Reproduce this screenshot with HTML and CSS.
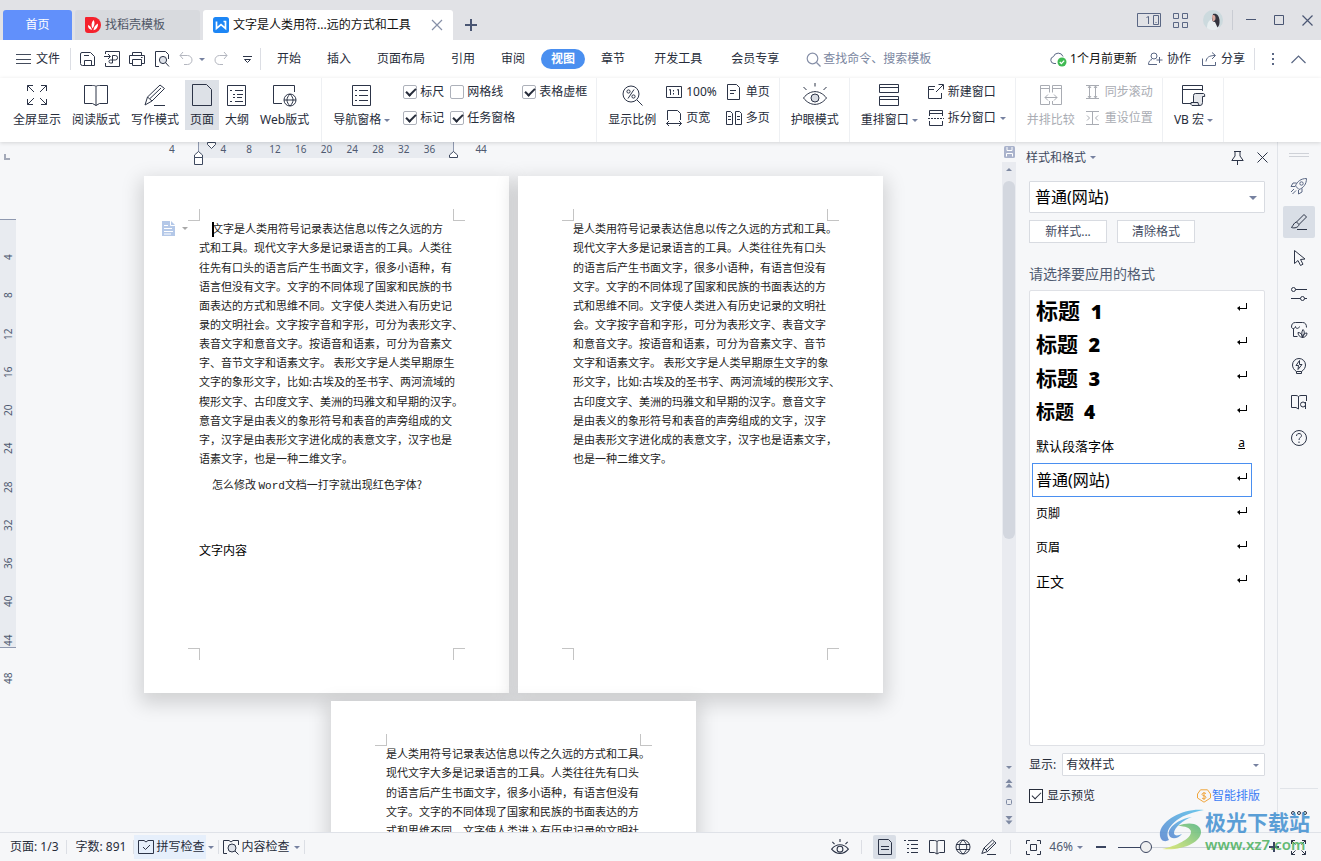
FILE: index.html
```html
<!DOCTYPE html>
<html lang="zh-CN">
<head>
<meta charset="utf-8">
<title>文字是人类用符...远的方式和工具</title>
<link rel="stylesheet" href="styles.css">
</head>
<body>
<div class="app">

<header class="titlebar">
  <nav class="doc-tabs">
    <button class="doc-tab home">首页</button>
    <button class="doc-tab template">
      <svg width="16" height="16" viewBox="0 0 16 16"><path d="M0 1Q0 0 1 0h7a8 8 0 0 1 0 16H3Q0 16 0 13z" fill="#f5222d"/><path d="M3 8c2 .5 3.500 2.500 4 5-3-.5-4.200-2.500-4-5zM8.500 3c1.800 2.500 1 6-1 8.500C6 9 6.200 5.500 8.500 3zM13 6.500c.2 3.500-1.500 6-4.500 6.800C8.800 10 10.200 7.800 13 6.500z" fill="#fff"/></svg>
      找稻壳模板</button>
    <div class="doc-tab current">
      <svg width="16" height="16" viewBox="0 0 16 16"><rect width="16" height="16" rx="2.500" fill="#1d86f5"/><path d="M3.500 4.500v6.800L8 7.500l4.500 3.800V4.500h-2" fill="none" stroke="#fff" stroke-width="1.700"/></svg>
      <span class="doc-name">文字是人类用符...远的方式和工具</span>
      <button class="plain" aria-label="关闭标签"><svg width="12" height="12" viewBox="0 0 12 12"><path d="M1 1l10 10M11 1L1 11" stroke="#8790a8" stroke-width="1.200"/></svg></button>
    </div>
    <button class="plain new-tab" aria-label="新建"><svg width="12" height="12" viewBox="0 0 12 12"><path d="M6 0v12M0 6h12" stroke="#4a5673" stroke-width="2"/></svg></button>
  </nav>
  <div class="win-tools">
    <button class="plain" aria-label="窗口布局"><svg width="24" height="14" viewBox="0 0 24 14" fill="none" stroke="#5a6784"><path d="M.5.5h23v13H.5zM16.500 2.500h5v9h-5zM9.500 4.500l2-1v7.500M18.500 9.500h1"/></svg></button>
    <button class="plain apps" aria-label="应用"><svg width="15" height="15" viewBox="0 0 15 15" fill="none" stroke="#5a6784"><path d="M.5.5h5v5h-5zM9.500.5h5v5h-5zM.5 9.500h5v5h-5zM9.500 9.500h5v5h-5z"/></svg></button>
    <button class="plain avatar" aria-label="用户"><svg width="20" height="20" viewBox="0 0 20 20"><circle cx="10" cy="10" r="10" fill="#ccdade"/><path d="M4 18c0-5 2-8 5-9l5 1 2 8a10 10 0 0 1-12 0z" fill="#e8eef0"/><path d="M10 4c4-1 6 2 6.500 6 .3 4-.5 6-2 7.500L12 12c-2 0-3-1-3-3z" fill="#33343e"/><path d="M9 5.500c2-1 3.500 0 3.500 2.500s-1.500 3.500-3 3z" fill="#d9aaa0"/></svg></button>
    <i class="vline"></i>
    <button class="plain" aria-label="最小化"><svg width="10" height="12" viewBox="0 0 10 12"><path d="M0 5.500h10" stroke="#4a5673"/></svg></button>
    <button class="plain max" aria-label="最大化"><svg width="10" height="10" viewBox="0 0 10 10"><path d="M.5.5h9v9h-9z" fill="none" stroke="#4a5673"/></svg></button>
    <button class="plain" aria-label="关闭"><svg width="11" height="11" viewBox="0 0 11 11"><path d="M.5.5l10 10M10.500.5l-10 10" stroke="#4a5673" stroke-width="1.200"/></svg></button>
  </div>
</header>

<div class="menubar">
  <button class="file-btn"><svg width="15" height="12" viewBox="0 0 15 12"><path d="M0 1.500h15M0 6.500h15M0 10.500h15" stroke="#444c5c"/></svg>文件</button>
  <i class="vline"></i>
  <div class="quick">
    <button class="plain" aria-label="保存"><svg class="ico" width="16" height="16" viewBox="0 0 16 16"><path d="M3 1.500h8.500l4 4v9H3.500q-2 0-2-2V3q0-1.500 1.500-1.500zM5.500 14.500v-5h7v5M5 4.500h5"/></svg></button>
    <button class="plain" aria-label="输出PDF"><svg class="ico" width="16" height="16" viewBox="0 0 16 16"><path d="M1.500 3V.500h14v15h-14V12M0 5.500h6M4 3l2.500 2.500L4 8M8.500 12V4.500h2.800a2.200 2.200 0 0 1 0 4.500H6.500a1.500 1.500 0 1 0 0 3h2"/></svg></button>
    <button class="plain" aria-label="打印"><svg class="ico" width="16" height="16" viewBox="0 0 16 16"><path d="M3.500 4.500v-3h9v3M3.500 12.500h-3v-8h15v8h-3M3.500 8.500h9v6h-9zM12 6.500h1.500"/></svg></button>
    <button class="plain" aria-label="打印预览"><svg class="ico" width="16" height="16" viewBox="0 0 16 16"><path d="M5 15.500H1.500V.500h10l3 3V8"/><circle cx="9" cy="9" r="3.600" fill="#dfe3ea"/><path d="M11.500 11.500l3.500 4"/></svg></button>
    <button class="plain pair" aria-label="撤销"><svg class="ico dim" width="14" height="16" viewBox="0 0 14 16"><path d="M4 1L1 4.500 4 8M1 4.500h7.500a4.500 4.500 0 0 1 0 9H5"/></svg><b class="caret"></b></button>
    <button class="plain" aria-label="恢复"><svg class="ico dim" width="14" height="16" viewBox="0 0 14 16"><path d="M10 1l3 3.500L10 8M13 4.500H5.500a4.500 4.500 0 0 0 0 9H9"/></svg></button>
    <button class="plain more" aria-label="自定义"><svg class="ico" width="9" height="9" viewBox="0 0 9 9"><path d="M0 1.500h9M1.500 4.500h6l-3 3z"/></svg></button>
  </div>
  <i class="vline"></i>
  <nav class="menu">
    <button>开始</button><button>插入</button><button>页面布局</button><button>引用</button><button>审阅</button><button class="active">视图</button><button>章节</button><button class="shift">开发工具</button><button class="shift">会员专享</button>
  </nav>
  <label class="search"><svg width="15" height="15" viewBox="0 0 15 15" fill="none" stroke="#8790a8" stroke-width="1.200"><circle cx="6.500" cy="6.500" r="5.300"/><path d="M10.500 10.500l4 4"/></svg><input type="text" placeholder="查找命令、搜索模板" aria-label="查找命令"></label>
  <div class="menu-right">
    <button class="strong"><svg width="17" height="16" viewBox="0 0 17 16"><path d="M6 12.500H4a3.500 3.500 0 0 1-.5-6.900A5 5 0 0 1 13 5.500" fill="none" stroke="#5a6784"/><circle cx="12" cy="11" r="4.500" fill="#3fba52"/><path d="M9.800 11l1.600 1.600 2.800-3" fill="none" stroke="#fff" stroke-width="1.300"/></svg>1个月前更新</button>
    <button class="collab"><svg class="ico soft" width="15" height="14" viewBox="0 0 15 14"><circle cx="6" cy="4" r="3"/><path d="M4 7.500C2 8 .500 9.500.500 12.500H9M11.500 5v6M8.500 8h6"/></svg>协作</button>
    <button class="share"><svg class="ico soft" width="15" height="14" viewBox="0 0 15 14"><path d="M.500 6.500v7h13V10M4 9.500c.5-4 3-6 9-6M10 .500l3.500 3L10 7"/></svg>分享</button>
    <i class="vline"></i>
    <button class="plain dots" aria-label="更多"><svg width="3" height="13" viewBox="0 0 3 13" fill="#5a6784"><path d="M0 0h2v2H0zM0 5h2v2H0zM0 10h2v2H0z"/></svg></button>
    <button class="plain" aria-label="折叠功能区"><svg width="15" height="9" viewBox="0 0 15 9"><path d="M.5 8l7-7 7 7" fill="none" stroke="#5a6784" stroke-width="1.200"/></svg></button>
  </div>
</div>

<div class="ribbon">
  <div class="group views-group">
    <button class="big"><svg class="ico" width="24" height="24" viewBox="0 0 24 24"><path d="M2.500 8V2.500H8M2.500 2.500L9 9M16 2.500h5.500V8M21.500 2.500L15 9M2.500 16v5.500H8M2.500 21.500L9 15M21.500 16v5.500H16M21.500 21.500L15 15"/></svg><span>全屏显示</span></button>
    <button class="big"><svg class="ico" width="24" height="24" viewBox="0 0 24 24"><path d="M12 3.500C11 2.500 10 2.500 8.500 2.500h-8v18h8l3.500 2 3.500-2h8v-18h-8c-1.500 0-2.500 0-3.500 1zM12 3.500v19"/></svg><span>阅读版式</span></button>
    <button class="big"><svg class="ico" width="24" height="24" viewBox="0 0 24 24"><path d="M2 22l2.500-8L17 2l4.500 3.500L9 18zM4.500 14L9 18M7 15.500L18 5M11 22.500h11"/></svg><span>写作模式</span></button>
    <button class="big on"><svg class="ico" width="24" height="24" viewBox="0 0 24 24"><path d="M2.500 1.500h14l5 5v16h-19z"/></svg><span>页面</span></button>
    <button class="big"><svg class="ico" width="24" height="24" viewBox="0 0 24 24"><path d="M2.500 2.500h18v20h-18zM5 7.500h2M10 7.500h8M8 11.500h2M12 11.500h6M8 14.500h2M12 14.500h5M5 18.500h2M10 18.500h8"/></svg><span>大纲</span></button>
    <button class="big"><svg class="ico" width="24" height="24" viewBox="0 0 24 24"><path d="M9 20.500H.5v-18h21V9"/><circle cx="17" cy="17" r="6"/><path d="M11 17h12M17 11c-4 4-4 8 0 12M17 11c4 4 4 8 0 12"/></svg><span>Web版式</span></button>
  </div>
  <div class="group">
    <button class="big"><svg class="ico" width="24" height="24" viewBox="0 0 24 24"><path d="M2.500 2.500h18v20h-18zM5 7.500h2M9 7.500h9M5 12.500h2M9 12.500h9M5 17.500h2M9 17.500h9"/></svg><span>导航窗格<b class="caret"></b></span></button>
    <div class="checks">
      <label><input type="checkbox" checked>标尺</label><label><input type="checkbox">网格线</label><label><input type="checkbox" checked>表格虚框</label>
      <label><input type="checkbox" checked>标记</label><label><input type="checkbox" checked>任务窗格</label>
    </div>
  </div>
  <div class="group">
    <button class="big"><svg class="ico" width="24" height="24" viewBox="0 0 24 24"><circle cx="11" cy="11" r="8"/><path d="M17 17l5.500 5.500M14 6.500l-6 9"/><circle cx="8.500" cy="8.500" r="1.600"/><circle cx="13.500" cy="13.500" r="1.600"/></svg><span>显示比例</span></button>
    <div class="stack">
      <button><svg class="ico" width="16" height="16" viewBox="0 0 16 16"><path d="M.5 2.500h15v11H.5zM3 6l1.500-.5v5.500M11 6l1.500-.5v5.500M7.500 6v1.500M7.500 9v1.500"/></svg>100%</button>
      <button><svg class="ico" width="16" height="16" viewBox="0 0 16 16"><path d="M1.500 10V.500h10l3 3V10M.5 13.500h15M3 11L.5 13.500 3 16M13 11l2.500 2.500L13 16"/></svg>页宽</button>
    </div>
    <div class="stack">
      <button><svg class="ico" width="16" height="16" viewBox="0 0 16 16"><path d="M1.500.5h9l3 3v12h-12zM4 6.500h6M4 9.500h4"/></svg>单页</button>
      <button><svg class="ico" width="16" height="16" viewBox="0 0 16 16"><path d="M.5 1.500h4l2 2v11h-6zM9.500 1.500h4l2 2v11h-6zM2 6.500h3M2 9.500h3M11 6.500h3M11 9.500h3"/></svg>多页</button>
    </div>
  </div>
  <div class="group">
    <button class="big"><svg class="ico" width="24" height="24" viewBox="0 0 24 24"><path d="M.5 15C7 6.500 17 6.500 23.500 15 17 23.500 7 23.500.5 15zM12 0v3.500M.5 4l3 3M23.500 4l-3 3"/><circle cx="12" cy="15" r="4" fill="#d9dce3"/></svg><span>护眼模式</span></button>
  </div>
  <div class="group">
    <button class="big"><svg class="ico" width="24" height="24" viewBox="0 0 24 24"><path d="M2.500 1.500h19v8h-19zM2.500 4.500h19M2.500 13.500h19v9h-19zM2.500 16.500h19"/></svg><span>重排窗口<b class="caret"></b></span></button>
    <div class="stack">
      <button><svg class="ico" width="16" height="16" viewBox="0 0 16 16"><path d="M7 2.500H.5v12h13V9M.5 5.500H6M8 8l7-7M10.500.5h5v5"/></svg>新建窗口</button>
      <button><svg class="ico" width="16" height="16" viewBox="0 0 16 16"><path d="M1.500 6V.5h13V6M1.500 3.500h13M1.500 11v4.500h13V11"/><path d="M0 8.500h16" stroke-dasharray="2 1"/></svg>拆分窗口<b class="caret"></b></button>
    </div>
  </div>
  <div class="group off">
    <button class="big" disabled><svg class="ico" width="24" height="24" viewBox="0 0 24 24"><path d="M10.500 9.500v-7h-9v19h9V18M1.500 5.500h9M13.500 9.500v-7h9v19h-9V18M13.500 5.500h9M6 14.500h12M9 11.500l-3 3 3 3M15 11.500l3 3-3 3"/></svg><span>并排比较</span></button>
    <div class="stack">
      <button disabled><svg class="ico" width="16" height="16" viewBox="0 0 16 16"><path d="M1 1.500h13M1 14.500h13M4.500 2v12M10.500 2v12M3 4l1.500-2L6 4M3 12l1.500 2L6 12M9 4l1.500-2L12 4M9 12l1.500 2 1.500-2"/></svg>同步滚动</button>
      <button disabled><svg class="ico" width="16" height="16" viewBox="0 0 16 16"><path d="M1 1.500h13M1 14.500h13M7.500 2v12M2 5.500L4.500 8 2 10.500M13 5.500L10.500 8l2.500 2.500"/></svg>重设位置</button>
    </div>
  </div>
  <div class="group">
    <button class="big"><svg class="ico" width="24" height="24" viewBox="0 0 24 24"><path d="M10 20.500H1.500v-18h20V8M1.500 6.500h20"/><path d="M12.500 19.500v-7q0-2 2-2h8q1.500 0 1.200 3h-2.200v6q0 3-2.500 3h-8q-1.500-.5-1-3h7q0 3 2 3" fill="#e6e8ec"/></svg><span>VB 宏<b class="caret"></b></span></button>
  </div>
</div>

<main class="workspace">
  <aside class="ruler-v">
    <div class="tab-stop"><svg width="6" height="6" viewBox="0 0 6 6"><path d="M1 0v5h5" fill="none" stroke="#a3a9b8" stroke-width="2"/></svg></div>
    <div class="band"><span>4</span><span>8</span><span>12</span><span>16</span><span>20</span><span>24</span><span>28</span><span>32</span><span>36</span><span>40</span><span>44</span><span>48</span></div>
  </aside>

  <section class="canvas">
    <div class="ruler-h">
      <div class="ticks"><span>4</span><span></span><span>4</span><span>8</span><span>12</span><span>16</span><span>20</span><span>24</span><span>28</span><span>32</span><span>36</span><span></span><span>44</span></div>
      <div class="range">
        <svg class="m-first" width="9" height="7" viewBox="0 0 9 7"><path d="M.5.500h8v2l-4 4-4-4z"/></svg>
        <svg class="m-left" width="9" height="14" viewBox="0 0 9 14"><path d="M.5 6.500v-2.500l4-3.500 4 3.500v2.500zM.5 6.500h8v7h-8z"/></svg>
        <svg class="m-right" width="9" height="7" viewBox="0 0 9 7"><path d="M.5 6.500v-2.500l4-3.500 4 3.500v2.500z"/></svg>
      </div>
    </div>
    <div class="pages">
      <article class="page">
        <i class="mark tl"></i><i class="mark tr"></i><i class="mark bl"></i><i class="mark br"></i>
        <div class="para-tool"><svg width="13" height="15" viewBox="0 0 13 15"><path d="M0 0h9l4 4v11H0z" fill="#b4c8e8"/><path d="M2 4.500h4M2 7.500h8M2 10.500h9M2 13h7M8.500 0v4.500H13" fill="none" stroke="#fff"/></svg><b class="caret"></b></div>
        <p class="first"><span class="indent cursor">文字是人类用符号记录表达信息以传之久远的方</span><span>式和工具。现代文字大多是记录语言的工具。人类往</span><span>往先有口头的语言后产生书面文字，很多小语种，有</span><span>语言但没有文字。文字的不同体现了国家和民族的书</span><span>面表达的方式和思维不同。文字使人类进入有历史记</span><span>录的文明社会。文字按字音和字形，可分为表形文字、</span><span>表音文字和意音文字。按语音和语素，可分为音素文</span><span>字、音节文字和语素文字。 表形文字是人类早期原生</span><span>文字的象形文字，比如:古埃及的圣书字、两河流域的</span><span>楔形文字、古印度文字、美洲的玛雅文和早期的汉字。</span><span>意音文字是由表义的象形符号和表音的声旁组成的文</span><span>字，汉字是由表形文字进化成的表意文字，汉字也是</span><span>语素文字，也是一种二维文字。</span></p>
        <p class="question"><span class="indent">怎么修改 <em>Word</em>文档一打字就出现红色字体?</span></p>
        <p class="body-text">文字内容</p>
      </article>
      <article class="page">
        <i class="mark tl"></i><i class="mark tr"></i><i class="mark bl"></i><i class="mark br"></i>
        <p><span>是人类用符号记录表达信息以传之久远的方式和工具。</span><span>现代文字大多是记录语言的工具。人类往往先有口头</span><span>的语言后产生书面文字，很多小语种，有语言但没有</span><span>文字。文字的不同体现了国家和民族的书面表达的方</span><span>式和思维不同。文字使人类进入有历史记录的文明社</span><span>会。文字按字音和字形，可分为表形文字、表音文字</span><span>和意音文字。按语音和语素，可分为音素文字、音节</span><span>文字和语素文字。 表形文字是人类早期原生文字的象</span><span>形文字，比如:古埃及的圣书字、两河流域的楔形文字、</span><span>古印度文字、美洲的玛雅文和早期的汉字。意音文字</span><span>是由表义的象形符号和表音的声旁组成的文字，汉字</span><span>是由表形文字进化成的表意文字，汉字也是语素文字，</span><span>也是一种二维文字。</span></p>
      </article>
      <article class="page">
        <i class="mark tl"></i><i class="mark tr"></i>
        <p><span>是人类用符号记录表达信息以传之久远的方式和工具。</span><span>现代文字大多是记录语言的工具。人类往往先有口头</span><span>的语言后产生书面文字，很多小语种，有语言但没有</span><span>文字。文字的不同体现了国家和民族的书面表达的方</span><span>式和思维不同。文字使人类进入有历史记录的文明社</span></p>
      </article>
    </div>
  </section>

  <div class="scrollbar">
    <svg class="sb-save" width="11" height="12" viewBox="0 0 11 12"><rect width="11" height="12" rx="1.500" fill="#aab3cc"/><path d="M3 1v3.500h5V1M2.500 10.500V7.500h6v3" fill="none" stroke="#fff"/></svg>
    <div class="sb-track">
      <b class="up"></b>
      <i class="thumb"></i>
      <span class="grow"></span>
      <b class="down"></b>
      <svg width="8" height="9" viewBox="0 0 8 9" fill="#7f8aa3"><path d="M4 0l3.500 4h-7zM4 4.500l3.500 4h-7z"/></svg>
      <svg width="8" height="8" viewBox="0 0 8 8"><rect x="1.500" y="1.500" width="5" height="5" rx="1" fill="none" stroke="#7f8aa3"/></svg>
      <svg width="8" height="9" viewBox="0 0 8 9" fill="#7f8aa3"><path d="M4 4L.5 0h7zM4 8.500L.5 4.500h7z"/></svg>
    </div>
  </div>

  <aside class="panel">
    <div class="panel-head">
      <button class="panel-title">样式和格式<b class="caret"></b></button>
      <button class="plain" aria-label="固定"><svg class="ico" width="13" height="14" viewBox="0 0 13 14"><path d="M3 .500h7M4 .500v4.500L.800 9.500h11.400L9 5V.500M6.500 9.500V14"/></svg></button>
      <button class="plain" aria-label="关闭窗格"><svg class="ico" width="11" height="11" viewBox="0 0 11 11"><path d="M.5.500l10 10M10.500.500l-10 10"/></svg></button>
    </div>
    <div class="picker large"><select aria-label="当前样式"><option>普通(网站)</option></select></div>
    <div class="panel-btns"><button>新样式...</button><button>清除格式</button></div>
    <h2 id="fmt">请选择要应用的格式</h2>
    <ul class="styles" aria-labelledby="fmt">
      <li class="h1"><span>标题 <b>1</b></span><i class="ret"></i></li>
      <li class="h2"><span>标题 <b>2</b></span><i class="ret"></i></li>
      <li class="h3"><span>标题 <b>3</b></span><i class="ret"></i></li>
      <li class="h4"><span>标题 <b>4</b></span><i class="ret"></i></li>
      <li class="s13"><span>默认段落字体</span><u>a</u></li>
      <li class="s16 sel"><span>普通(网站)</span><i class="ret"></i></li>
      <li class="s12"><span>页脚</span><i class="ret"></i></li>
      <li class="s12"><span>页眉</span><i class="ret"></i></li>
      <li class="s14"><span>正文</span><i class="ret"></i></li>
    </ul>
    <div class="show-row"><label for="show">显示:</label><div class="picker"><select id="show"><option>有效样式</option></select></div></div>
    <div class="preview-row"><label><input type="checkbox" checked>显示预览</label>
      <a href="#"><svg width="14" height="14" viewBox="0 0 14 14" fill="none" stroke="#f0a53c"><path d="M3.500.800h7L13.500 5v4L7 13.200.500 9V5z"/><path d="M9 4.500C7 3.500 5 4 5 5.500s4 1 4 2.700S6.500 10 5 9.200M7 3v8"/></svg>智能排版</a></div>
  </aside>

  <nav class="side">
    <i class="grip"></i>
    <button aria-label="推荐"><svg class="ico soft" width="18" height="18" viewBox="0 0 18 18"><path d="M5.500 9C7 4.500 11 1.500 16.500 1.500 16.500 7 13.500 11 9 12.500zM6.500 6H3L1 9.500h4M12 11.500V15l-3.500 2v-4M4 12l-3 3M6 13.500l-3.500 3.500"/><circle cx="11.500" cy="6.500" r="1.700"/></svg></button>
    <button class="on" aria-label="样式和格式"><svg class="ico" width="18" height="18" viewBox="0 0 18 18"><path d="M6.500 9L14 1.500l2.500 2.500L9 11.500zM6.500 9c-2.500.5-3 3-5 5.500 3 1 7 0 7.500-3M7 16.500h10"/></svg></button>
    <button aria-label="选择"><svg class="ico" width="18" height="18" viewBox="0 0 18 18"><path d="M4.500 1.500v13l3.500-3 2.500 5 2.500-1.300-2.500-4.700 4.500-.5z"/></svg></button>
    <button aria-label="设置"><svg class="ico" width="18" height="18" viewBox="0 0 18 18"><circle cx="3.500" cy="4.500" r="2"/><path d="M5.500 4.500H17M1 13.500h9.500M14.500 13.500H17"/><circle cx="12.500" cy="13.500" r="2"/></svg></button>
    <button aria-label="素材"><svg class="ico" width="18" height="18" viewBox="0 0 18 18"><path d="M3.500 7.500v8h4M1.500 6q0-4.500 4-4.500h7q4 0 4 5M1.500 6c.5 2.500 3.500 2 4-.5 0 2.500 3.500 2.500 4 0"/><path d="M12.500 16.500c-3-.5-4.500-2.500-4.500-5 2.500 0 4 1.500 4.500 5-1-3-1-6 .5-8 2 2 1.500 5-.5 8 .5-3 2-4.500 4.500-4.500 0 2.500-2 4.500-4.500 4.500z"/></svg></button>
    <button aria-label="创意"><svg class="ico" width="18" height="18" viewBox="0 0 18 18"><path d="M6.500 14.500C4 13 2.500 10.500 2.500 8a6.500 6.500 0 0 1 13 0c0 2.500-1.500 5-4 6.500zM6.500 14.500v2h5v-2M9.500 3.500L6 8.500h2.500L8 12.500l4-5H9.500z"/></svg></button>
    <button aria-label="阅读"><svg class="ico" width="18" height="18" viewBox="0 0 18 18"><path d="M8.500 3.500Q7.500 2.500 6 2.500H1.500v12H6l2.500 1.500M8.500 3.500Q9.500 2.500 11 2.500h5.500V8M8.500 3.500V16"/><circle cx="13" cy="11.500" r="2.500"/><path d="M15.500 9v7"/></svg></button>
    <button aria-label="帮助"><svg class="ico" width="18" height="18" viewBox="0 0 18 18"><circle cx="9" cy="9" r="7.500"/><path d="M6.500 7c0-3.500 5-3 5-.5 0 2-2.500 2-2.500 4.500M9 12.500V14"/></svg></button>
    <span class="side-end"></span>
    <button aria-label="更多"><svg class="ico" width="18" height="18" viewBox="0 0 18 18"><circle cx="3" cy="9" r="1.500"/><circle cx="9" cy="9" r="1.500"/><circle cx="15" cy="9" r="1.500"/></svg></button>
  </nav>
</main>

<footer class="status">
  <div class="st-left">
    <span class="cell">页面: 1/3</span><span class="cell">字数: 891</span>
    <span class="cell tight"><button class="lit"><svg class="ico" width="16" height="16" viewBox="0 0 16 16"><path d="M.500 1.500h5.500l2 1.500 2-1.500h5.500v13H.500zM5 8l2.500 2.500L12 6"/></svg>拼写检查</button><b class="caret"></b></span>
    <span class="cell tight"><button><svg class="ico" width="16" height="16" viewBox="0 0 16 16"><path d="M4 14.500H.500v-13H6l2 1.500 2-1.500h5.500V6"/><circle cx="9" cy="9" r="4" fill="#dfe3ea"/><path d="M12 12l3.500 3.500"/></svg>内容检查</button><b class="caret"></b></span>
  </div>
  <div class="st-right">
    <button class="plain view" aria-label="护眼"><svg class="ico" width="18" height="16" viewBox="0 0 24 22"><path d="M.500 14C7 6 17 6 23.500 14 17 22 7 22 .500 14zM12 0v4M1.500 4l3 3M22.500 4l-3 3" stroke-width="1.500"/><circle cx="12" cy="14" r="4" stroke-width="1.500"/></svg></button>
    <i class="vline"></i>
    <div class="views">
      <button class="plain view on" aria-label="页面视图"><svg class="ico" width="16" height="16" viewBox="0 0 16 16"><path d="M1.500.500h10l3 3v12h-13zM4 7.500h8M4 10.500h8"/></svg></button>
      <button class="plain view" aria-label="大纲视图"><svg class="ico" width="16" height="16" viewBox="0 0 16 16"><path d="M1 1.500h2M5 1.500h10M4 5.500h2M8 5.500h7M4 9.500h2M8 9.500h7M4 13.500h2M8 13.500h7"/></svg></button>
      <button class="plain view" aria-label="阅读视图"><svg class="ico" width="16" height="16" viewBox="0 0 16 16"><path d="M8 2.500Q7 1.500 5.500 1.500h-5v12h5L8 15l2.500-1.500h5v-12h-5Q9 1.500 8 2.500zV15"/></svg></button>
      <button class="plain view" aria-label="Web视图"><svg class="ico" width="16" height="16" viewBox="0 0 16 16"><circle cx="8" cy="8" r="7"/><path d="M1 5.500h14M1 10.500h14M8 1c-5 4-5 10 0 14M8 1c5 4 5 10 0 14"/></svg></button>
      <button class="plain view" aria-label="写作视图"><svg class="ico" width="16" height="16" viewBox="0 0 16 16"><path d="M.800 14.500L3 9l8.500-8 3.500 3-8.500 8.500zM3 9l3.500 3.500M5 11l8-7.500M6 15.500h9"/></svg></button>
    </div>
    <i class="vline"></i>
    <button class="plain fit" aria-label="适应窗口"><svg class="ico" width="15" height="15" viewBox="0 0 15 15"><path d="M.500 4V.500H4M11 .500h3.500V4M.500 11v3.500H4M14.500 11v3.500H11M4.500 4.500h6v6h-6z"/></svg></button>
    <button class="zoom">46%<b class="caret"></b></button>
    <button class="plain" aria-label="缩小"><svg width="10" height="10" viewBox="0 0 10 10"><path d="M0 5h10" stroke="#3a4560" stroke-width="2"/></svg></button>
    <input class="slider" type="range" min="0" max="100" value="17" aria-label="缩放">
    <button class="plain" aria-label="放大"><svg width="10" height="10" viewBox="0 0 10 10"><path d="M0 5h10M5 0v10" stroke="#3a4560" stroke-width="2"/></svg></button>
    <button class="plain full" aria-label="全屏"><svg class="ico" width="15" height="15" viewBox="0 0 15 15"><path d="M.500 4V.500H4M.500.500l4 4M11 .500h3.500V4M14.500.500l-4 4M.500 11v3.500H4M.500 14.500l4-4M14.500 11v3.500H11M14.500 14.500l-4-4"/></svg></button>
  </div>
</footer>

<div class="brand" aria-hidden="true">
  <svg width="46" height="42" viewBox="0 0 46 42"><defs><linearGradient id="b1" x1="1" y1="0" x2="0" y2="1"><stop offset="0" stop-color="#55c0ea"/><stop offset="1" stop-color="#5583cf"/></linearGradient><linearGradient id="b2" x1="1" y1="0" x2="0" y2="1"><stop offset="0" stop-color="#4fb37c"/><stop offset="1" stop-color="#e2ea6a"/></linearGradient></defs><path d="M45 1C25-1 4 10 1 23c-1 8 4 11 9 8-4-7 0-14 8-20 7-5 16-8 27-10z" fill="url(#b1)"/><path d="M33 8C19 10 8 19 10 26c2 5 9 4 13-1-4 2-8 2-8-1 0-5 9-13 18-16z" fill="url(#b1)"/><path d="M19 17c12-5 23-2 23 6C42 33 24 42 3 40c14-3 29-10 29-17 0-4-6-6-13-6z" fill="url(#b2)"/></svg>
  <div><strong>极光下载站</strong><span>www.xz7.com</span></div>
</div>

</div>
</body>
</html>
```
FILE: styles.css
```css
* { box-sizing: border-box; }

body {
  margin: 0;
  font: 12px/16px "Noto Sans", "Noto Sans CJK SC", sans-serif;
  color: #262c3a;
}

button, input, select {
  font: inherit;
  color: inherit;
  margin: 0;
}

button {
  display: flex;
  align-items: center;
  padding: 0;
  border: 0;
  background: none;
  white-space: nowrap;
}

svg { display: block; flex: none; }

.ico { fill: none; stroke: #2c3447; overflow: visible; }
.ico.dim { stroke: #b3b6bf; }
.ico.soft { stroke: #5a6784; }

.caret {
  flex: none;
  border: 3px solid transparent;
  border-top-color: #7681a0;
  border-bottom: 0;
}

.vline { width: 1px; background: #dcdee4; flex: none; }

.app {
  position: relative;
  display: flex;
  flex-direction: column;
  height: 100vh;
  overflow: hidden;
  background: #f6f7f9;
}

/* title bar */
.titlebar {
  display: flex;
  justify-content: space-between;
  height: 40px;
  padding-left: 3px;
  background: #e1e2e6;
  flex: none;
}

.doc-tabs { display: flex; align-items: flex-end; gap: 3px; }

.doc-tab {
  display: flex;
  align-items: center;
  height: 30px;
  border-radius: 3px 3px 0 0;
  gap: 4px;
}
.doc-tab.home { width: 69px; justify-content: center; background: #6190fb; color: #fff; }
.doc-tab.template { width: 125px; padding-left: 10px; background: #d8dade; color: #4f5666; }
.doc-tab.current { width: 250px; padding: 0 10px; background: #fff; color: #111; }
.doc-name { flex: 1; }
.new-tab { height: 30px; padding-left: 9px; }

.win-tools { display: flex; align-items: center; padding-right: 8px; }
.win-tools .vline { height: 20px; margin: 0 13px 0 9px; background: #c9ccd3; }
.apps { margin: 0 15px 0 12px; }
.max { margin: 0 18px; }

/* menu bar */
.menubar {
  display: flex;
  align-items: center;
  height: 38px;
  padding-left: 16px;
  background: #fff;
  flex: none;
}
.menubar .vline { height: 22px; }
.file-btn { gap: 5px; margin-right: 10px; }
.quick { display: flex; align-items: center; gap: 9px; padding: 0 8px; }
.quick .pair { gap: 6px; }
.quick .more { margin-left: 6px; }

.menu { display: flex; align-items: center; padding-left: 3px; }
.menu button { height: 20px; padding: 0 10px; margin: 0 3px; border-radius: 10px; }
.menu .active { background: #4a8ff0; color: #fff; font-weight: 700; }
.menu .shift { margin-left: 6px; }

.search { display: flex; align-items: center; gap: 2px; margin-left: 14px; }
.search input {
  width: 150px;
  padding: 0;
  border: 0;
  outline: 0;
  background: none;
}
.search input::placeholder { color: #7a86a0; opacity: 1; }

.menu-right { display: flex; align-items: center; margin-left: auto; padding-right: 15px; }
.menu-right button { gap: 4px; }
.menu-right .strong { gap: 3px; color: #111; }
.menu-right .collab, .menu-right .share { margin-left: 11px; }
.menu-right .vline { margin: 0 17px 0 9px; }
.menu-right .dots { margin-right: 16px; }

/* ribbon */
.ribbon {
  position: relative;
  z-index: 2;
  display: flex;
  height: 64px;
  padding-left: 2px;
  background: #fff;
  box-shadow: 0 1px 4px rgba(0, 0, 0, .14);
  flex: none;
}
.group {
  display: flex;
  align-items: flex-start;
  gap: 1px;
  padding: 2px 5px 0 6px;
  border-right: 1px solid #eef0f3;
}
.views-group { padding-right: 7px; }
.group .big {
  flex-direction: column;
  gap: 5px;
  height: 50px;
  padding: 3px 5px 0;
}
.group .big span { display: flex; align-items: center; gap: 3px; }
.group .on { background: #dde1e7; }
.stack { display: flex; flex-direction: column; gap: 10px; padding: 4px 4px 0; }
.stack button { height: 16px; gap: 4px; }
.off button { color: #a9acb3; }
.off .ico { stroke: #a9acb3; }

.checks {
  display: grid;
  grid-template-columns: 47px 72px auto;
  row-gap: 10px;
  padding: 4px 4px 0 7px;
}
label { display: flex; align-items: center; }
.checks label { gap: 3px; white-space: nowrap; }

input[type="checkbox"] {
  appearance: none;
  position: relative;
  width: 14px;
  height: 14px;
  border: 1px solid #adb1ba;
  border-radius: 2px;
  background: #fff;
}
input[type="checkbox"]:checked::before {
  content: "";
  position: absolute;
  left: 2px;
  top: 2px;
  width: 8px;
  height: 4px;
  border: solid #262c3a;
  border-width: 0 0 2px 2px;
  transform: rotate(-45deg);
}

/* workspace */
.workspace { display: flex; flex: 1; min-height: 0; }

.ruler-v { width: 16px; flex: none; color: #4f5a70; font-size: 10px; }
.tab-stop { height: 77px; padding: 12px 0 0 4px; }
.band {
  display: grid;
  grid-auto-rows: calc(459px / 12);
  height: 429px;
  padding-top: 18px;
  border: solid #8f99b0;
  border-width: 1px 0;
  background: #e8ebf0;
}
.band span {
  display: flex;
  height: 38px;
  align-items: center;
  justify-content: center;
  writing-mode: vertical-rl;
  transform: rotate(180deg);
}

.canvas { flex: 1; min-width: 0; padding-left: 9px; overflow: hidden; }

.ruler-h {
  position: relative;
  width: 739px;
  height: 34px;
  margin: 0 auto;
  color: #4f5a70;
  font-size: 10px;
}
.ticks {
  position: relative;
  z-index: 1;
  display: grid;
  grid-template-columns: repeat(13, 1fr);
  width: 335px;
  margin-left: 15px;
  line-height: 15px;
  text-align: center;
}
.range {
  position: absolute;
  top: 0;
  left: 54px;
  width: 256px;
  height: 16px;
  border: solid #8f99b0;
  border-width: 0 1px;
  background: #e8ebf0;
}
.range svg { position: absolute; fill: #fff; stroke: #3f4a60; }
.m-first { left: 8px; top: 0; }
.m-left { left: -5px; top: 9px; }
.m-right { right: -5px; top: 9px; }

.pages {
  display: flex;
  flex-wrap: wrap;
  justify-content: center;
  gap: 8px 9px;
}
.page {
  position: relative;
  width: 365px;
  height: 517px;
  padding: 43px 0 0 55px;
  background: #fff;
  box-shadow: 0 7px 18px 4px rgba(0, 0, 0, .15);
  font: 11px/19px "Noto Sans CJK SC", sans-serif;
  color: #222;
}
.page p { margin: 0; }
.page p span { display: block; white-space: pre; }
.page p span:nth-child(7n+3) { margin-top: 1px; }
.page .indent { margin-left: 13px; }
.page .question { margin-top: 7px; }
.page em { font: 11px "Liberation Mono", monospace; }
.page .body-text { margin-top: 46px; font-size: 12px; color: #000; }
.cursor::before {
  content: "";
  position: absolute;
  left: 68px;
  top: 46px;
  width: 2px;
  height: 15px;
  background: #000;
}

.mark { position: absolute; width: 12px; height: 12px; border: 0 solid #c4c4c4; }
.tl { left: 44px; top: 33px; border-width: 0 1px 1px 0; }
.tr { left: 309px; top: 33px; border-width: 0 0 1px 1px; }
.bl { left: 44px; top: 472px; border-width: 1px 1px 0 0; }
.br { left: 309px; top: 472px; border-width: 1px 0 0 1px; }

.para-tool {
  position: absolute;
  left: 18px;
  top: 45px;
  display: flex;
  align-items: center;
  gap: 7px;
}
.para-tool .caret { border-top-color: #a8a8a8; }

/* scroll bar */
.scrollbar { display: flex; flex-direction: column; width: 14px; margin-right: 1px; flex: none; }
.sb-save { margin: 4px 2px; }
.sb-track {
  display: flex;
  flex-direction: column;
  align-items: center;
  flex: 1;
  gap: 10px;
  padding: 6px 0 7px;
  background: #e9ebf0;
}
.up, .down { border: 3px solid transparent; border-top: 0; border-bottom-color: #7f8aa3; }
.down { border-top: 3px solid #7f8aa3; border-bottom: 0; }
.thumb { width: 12px; height: 358px; border-radius: 6px; background: #d3d7df; }
.grow { flex: 1; }

/* style panel */
.panel {
  display: flex;
  flex-direction: column;
  width: 260px;
  padding: 0 12px;
  flex: none;
}
.panel-head { display: flex; align-items: center; gap: 13px; height: 31px; margin: 0 -3px; }
.panel-title { gap: 4px; margin-right: auto; color: #3f4a60; }

.picker { position: relative; flex: 1; display: flex; }
.picker::after {
  content: "";
  position: absolute;
  right: 6px;
  top: 50%;
  margin-top: -1px;
  border: 3px solid transparent;
  border-top-color: #7681a0;
  border-bottom: 0;
  pointer-events: none;
}
.picker select {
  appearance: none;
  width: 100%;
  height: 23px;
  padding: 0 3px;
  border: 1px solid #d8dbe1;
  border-radius: 1px;
  background: #fff;
}
.picker.large { flex: none; margin-top: 8px; }
.picker.large::after { right: 8px; border-width: 4px 4px 0; }
.picker.large select { height: 32px; padding: 0 5px; font-size: 16px; color: #000; }

.panel-btns { display: flex; gap: 10px; margin-top: 7px; }
.panel-btns button {
  justify-content: center;
  width: 78px;
  height: 23px;
  border: 1px solid #d8dbe1;
  background: #fff;
  color: #3f4a60;
}
.panel h2 { margin: 21px 0 6px; font-size: 14px; line-height: 20px; font-weight: 400; color: #4f5a70; }

.styles {
  flex: 1;
  margin: 0;
  padding: 2px;
  list-style: none;
  border: 1px solid #dfe1e6;
  border-radius: 2px;
  background: #fff;
  color: #000;
}
.styles li {
  display: flex;
  justify-content: space-between;
  width: 220px;
  height: 34px;
  padding: 0 4px 0 3px;
  line-height: 32px;
  border: 1px solid transparent;
}
.styles .sel { border-color: #4a8ff0; }
.styles b { margin-left: 5px; }
.h1 { font-size: 22px; font-weight: 700; }
.h2, .h3 { font-size: 21px; font-weight: 700; }
.h4 { font-size: 19px; font-weight: 700; }
.styles .h1 b, .styles .h2 b, .styles .h3 b { font-size: 20px; }
.s12 { font-size: 12px; }
.s13 { font-size: 13px; }
.s14 { font-size: 14px; }
.s16 { font-size: 16px; }
.styles u { font-size: 12px; line-height: 26px; padding-right: 2px; }
.ret {
  position: relative;
  width: 8px;
  height: 6px;
  margin-top: 9px;
  border: solid #000;
  border-width: 0 1px 1px 0;
}
.ret::before {
  content: "";
  position: absolute;
  left: -2px;
  bottom: -3px;
  border: solid transparent;
  border-width: 2px 3px 3px 0;
  border-right-color: #000;
}

.show-row { display: flex; align-items: center; gap: 6px; margin-top: 7px; }
.preview-row { display: flex; align-items: center; justify-content: space-between; height: 16px; margin: 12px 5px 28px 0; }
.preview-row label { gap: 4px; }
.preview-row input[type="checkbox"] { border-color: #262c3a; border-radius: 0; }
.preview-row input[type="checkbox"]:checked::before { border-width: 0 0 1px 1px; }
.preview-row a { display: flex; align-items: center; gap: 1px; color: #3b7cf5; text-decoration: none; }

/* side bar */
.side {
  display: flex;
  flex-direction: column;
  align-items: center;
  gap: 4px;
  width: 44px;
  padding-right: 1px;
  border-left: 1px solid #e1e4e9;
  flex: none;
}
.side button { width: 32px; height: 32px; justify-content: center; border-radius: 2px; flex: none; }
.side .on { background: #d9dee6; }
.grip { width: 20px; height: 4px; margin: 11px 0 9px; border: solid #cfd2d8; border-width: 1px 0; }
.side-end { width: 38px; flex: 1; border-bottom: 1px solid #e1e4e9; }
.side button:last-child { margin: 4px 0 3px; }

/* status bar */
.status {
  display: flex;
  justify-content: space-between;
  height: 29px;
  border-top: 1px solid #dfe2e8;
  flex: none;
}
.st-left, .st-right, .views { display: flex; align-items: center; }
.cell { display: flex; align-items: center; height: 14px; padding: 0 7px 0 9px; border-right: 1px solid #dcdfe5; }
.cell:first-child { padding-left: 10px; }
.cell.tight { gap: 2px; padding: 0 4px 0 0; }
.cell button { height: 24px; gap: 2px; padding: 0 2px 0 4px; }
.cell .lit { background: #e6effb; }
.status .vline { height: 14px; }

.view { width: 23px; height: 24px; justify-content: center; border-radius: 2px; }
.view.on { background: #d9dee6; }
.views { gap: 3px; padding: 0 10px 0 11px; }
.st-right { padding-right: 15px; }
.st-right > .view { margin-right: 10px; }
.fit { margin: 0 8px 0 15px; }
.zoom { gap: 4px; margin-right: 13px; color: #4f5a70; }
.full { margin-left: 12px; }

.slider {
  appearance: none;
  width: 144px;
  height: 14px;
  margin: 0 7px 0 12px;
  background: linear-gradient(#3a4560, #3a4560) 0 50% / 24px 1px no-repeat,
              linear-gradient(#cdd1d9, #cdd1d9) 0 50% / 100% 1px no-repeat;
}
.slider::-webkit-slider-thumb {
  appearance: none;
  width: 12px;
  height: 12px;
  border: 1px solid #3a4560;
  border-radius: 50%;
  background: #f0f0f0;
}

/* site badge over the lower right corner */
.brand {
  position: absolute;
  right: 11px;
  bottom: 8px;
  z-index: 3;
  display: flex;
  pointer-events: none;
  opacity: .85;
}
.brand strong, .brand span { display: block; white-space: nowrap; }
.brand strong { font-size: 21px; line-height: 26px; color: #3f8fd0; }
.brand span { font-size: 15px; line-height: 18px; color: #4bb05e; font-weight: 600; }
```
